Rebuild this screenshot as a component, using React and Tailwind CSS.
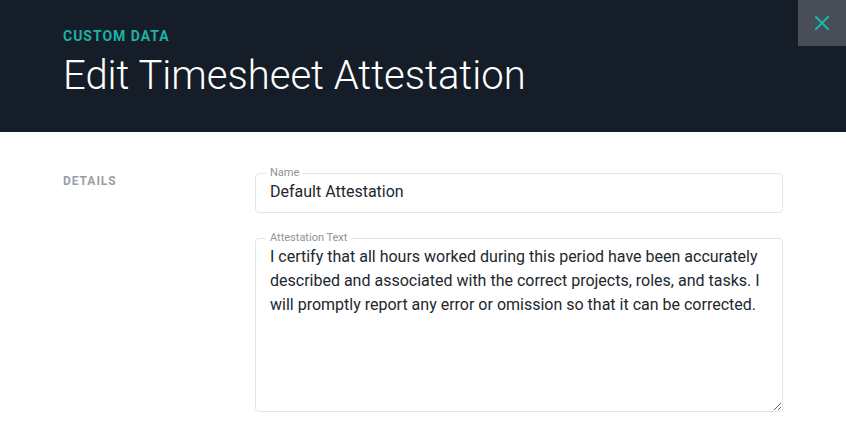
import { X } from 'lucide-react'

const attestation =
  'I certify that all hours worked during this period have been accurately described and associated with the correct projects, roles, and tasks. I will promptly report any error or omission so that it can be corrected.'

function OutlinedField({ label, children }) {
  return (
    <fieldset className="rounded-[4px] border border-[#e3e5e8] p-0 m-0 min-w-0">
      <legend className="ml-[10px] px-[4px] text-[11px] leading-[14px] text-[#8e9399]">{label}</legend>
      {children}
    </fieldset>
  )
}

export default function App() {
  return (
    <div className="w-[846px] h-[431px] bg-white overflow-hidden" style={{ fontFamily: 'Roboto, "Liberation Sans", sans-serif' }}>
      <header className="relative h-[132px] bg-[#151d28] px-[63px] pt-[28px]">
        <div className="text-[14px] font-bold tracking-[0.07em] leading-[16px] text-[#1bb3a5]">CUSTOM DATA</div>
        <h1 className="mt-[8px] text-[40px] font-light leading-[48px] text-white">Edit Timesheet Attestation</h1>
        <button className="absolute top-0 right-0 flex h-[46px] w-[48px] items-center justify-center bg-[#484d57] text-[#1bb3a5]">
          <X size={24} strokeWidth={2.2} />
        </button>
      </header>

      <main className="flex pt-[34px]">
        <div className="w-[255px] shrink-0 pl-[63px] pt-[8px] text-[12px] font-bold leading-[14px] tracking-[0.08em] text-[#9a9ea4]">
          DETAILS
        </div>
        <div className="flex w-[528px] flex-col gap-[18px]">
          <OutlinedField label="Name">
            <div className="px-[14px] pb-[8px] text-[16px] leading-[24px] text-[#22272e]">Default Attestation</div>
          </OutlinedField>
          <OutlinedField label="Attestation Text">
            <textarea
              readOnly
              defaultValue={attestation}
              className="block h-[166px] w-full resize-y bg-transparent px-[14px] py-0 text-[16px] leading-[24px] text-[#22272e] outline-none"
            />
          </OutlinedField>
        </div>
      </main>
    </div>
  )
}
